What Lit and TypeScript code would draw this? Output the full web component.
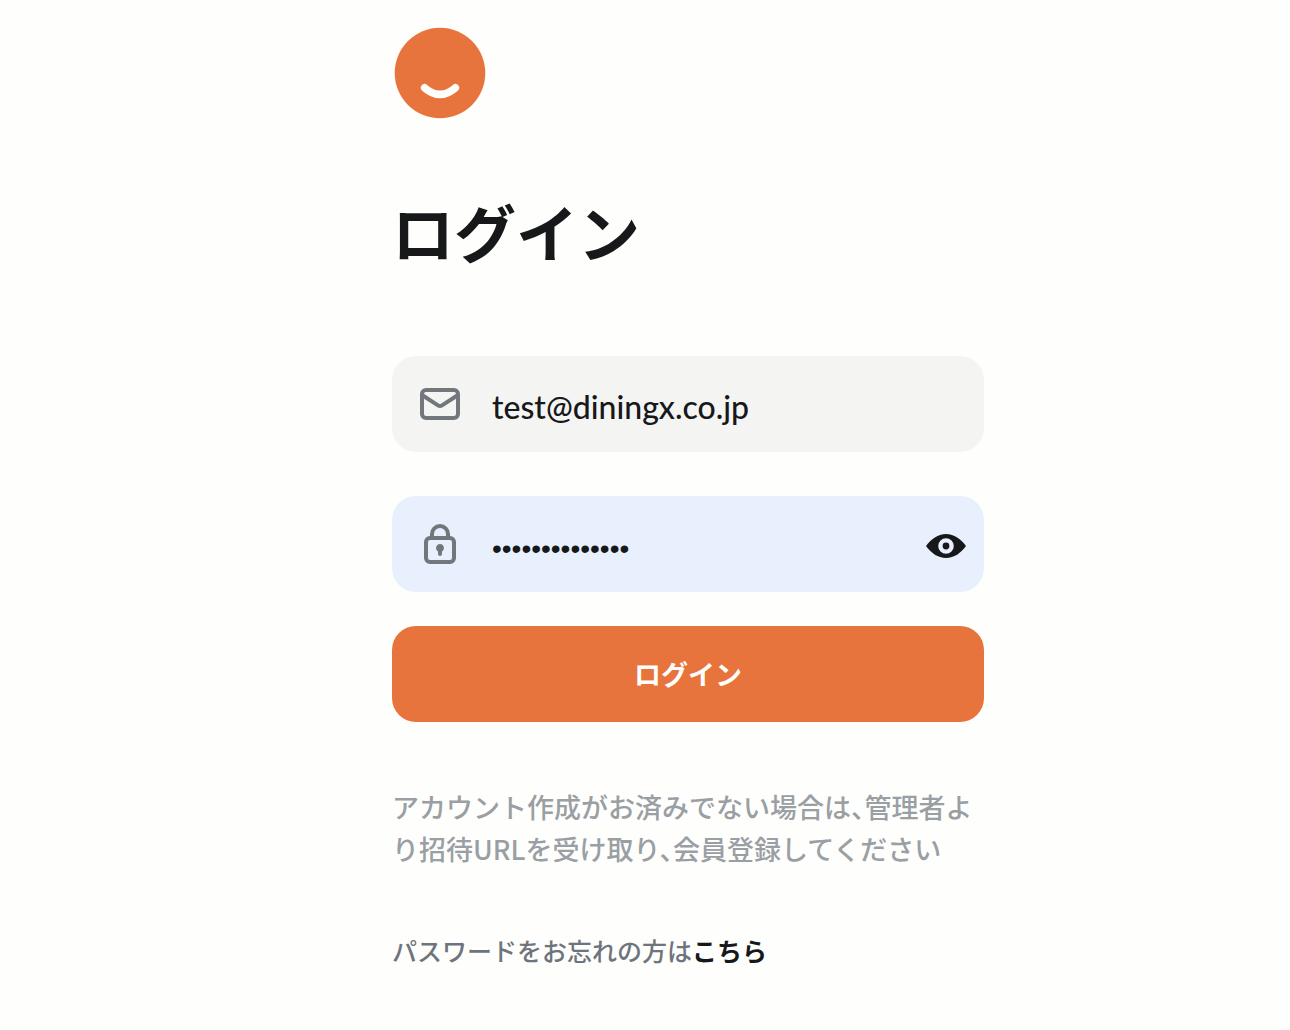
import { LitElement, html, css } from "lit";
import { customElement, state } from "lit/decorators.js";

@customElement("app-root")
export class AppRoot extends LitElement {
  @state() private revealed = false;

  static styles = css`
    :host {
      display: block;
      min-height: 100vh;
      box-sizing: border-box;
      padding: 25px 24px 24px 110px;
      background: #fefefc;
      color: #16181a;
      font-family: "Noto Sans CJK JP", sans-serif;
    }
    * {
      box-sizing: border-box;
    }
    .panel {
      max-width: 592px;
      margin: 0 auto;
      display: flex;
      flex-direction: column;
    }
    .logo {
      display: block;
      width: 96px;
      height: 96px;
    }
    .title {
      margin: 62px 0 77px;
      font-size: 62px;
      line-height: 96px;
      font-weight: 700;
    }
    .form {
      display: flex;
      flex-direction: column;
    }
    .field {
      display: flex;
      align-items: center;
      height: 96px;
      padding: 0 14px 0 24px;
      border-radius: 24px;
      background: #f4f4f3;
      margin-bottom: 44px;
    }
    .field.filled {
      background: #e8f0fe;
      margin-bottom: 34px;
    }
    .field-icon {
      display: flex;
      color: #72777c;
    }
    .icon {
      display: block;
      width: 48px;
      height: 48px;
    }
    .input {
      flex: 1;
      min-width: 0;
      height: 64px;
      margin-left: 28px;
      padding: 4px 0 0;
      border: 0;
      outline: 0;
      background: transparent;
      color: #16181a;
      font-family: Lato, sans-serif;
      font-size: 32px;
      font-weight: 500;
    }
    .input.secret {
      padding-top: 10px;
      font-family: "Liberation Sans", sans-serif;
      font-size: 28px;
    }
    .toggle {
      padding: 0;
      border: 0;
      background: transparent;
      color: #16181a;
      cursor: pointer;
    }
    .submit {
      height: 96px;
      padding: 0 0 2px;
      border: 0;
      border-radius: 24px;
      background: #e8743d;
      color: #fefefc;
      font-family: inherit;
      font-size: 27px;
      font-weight: 700;
      cursor: pointer;
    }
    .note {
      margin: 64px 0 0;
      color: #9a9fa4;
      font-size: 27px;
      line-height: 42px;
      font-weight: 500;
      font-feature-settings: "halt";
    }
    .forgot {
      margin: 59px 0 0;
      color: #6e747b;
      font-size: 25px;
      line-height: 42px;
      font-weight: 500;
    }
    .link {
      color: #16181a;
      font-weight: 700;
      text-decoration: none;
    }
  `;

  private toggle() {
    this.revealed = !this.revealed;
  }

  render() {
    return html`
      <main class="panel">
        <svg class="logo" viewBox="0 0 96 96" aria-hidden="true">
          <circle cx="48" cy="48" r="45.3" fill="#e8743d" />
          <path
            d="M32.6 62.8 Q48 76 63.4 62.8"
            fill="none"
            stroke="#fefefc"
            stroke-width="7.5"
            stroke-linecap="round"
          />
        </svg>
        <h1 class="title">ログイン</h1>
        <form class="form" @submit=${(e: Event) => e.preventDefault()}>
          <div class="field">
            <label class="field-icon" for="email" aria-label="メールアドレス">
              <svg class="icon" viewBox="0 0 48 48" fill="none" stroke="currentColor" stroke-width="4" stroke-linejoin="round">
                <rect x="6" y="10" width="36" height="28" rx="4" />
                <path d="M6 15 L22 25.4 Q24 26.7 26 25.4 L42 15" />
              </svg>
            </label>
            <input class="input" id="email" type="email" .value=${"test@diningx.co.jp"} />
          </div>
          <div class="field filled">
            <label class="field-icon" for="password" aria-label="パスワード">
              <svg class="icon" viewBox="0 0 48 48" fill="none" stroke="currentColor" stroke-width="4">
                <rect x="10" y="18" width="28" height="24" rx="4" />
                <path d="M16 18 V14 A8 8 0 0 1 32 14 V18" />
                <path
                  d="M24 24 A4 4 0 0 0 22 31.4 V34 A2 2 0 0 0 26 34 V31.4 A4 4 0 0 0 24 24 Z"
                  fill="currentColor"
                  stroke="none"
                />
              </svg>
            </label>
            <input
              class="input secret"
              id="password"
              type=${this.revealed ? "text" : "password"}
              .value=${"diningxlogin01"}
            />
            <button class="toggle" type="button" aria-label="パスワードを表示" @click=${this.toggle}>
              <svg class="icon" viewBox="0 0 48 48">
                <path
                  d="M4 26 C9 19 16 14 24 14 C32 14 39 19 44 26 C39 33 32 38 24 38 C16 38 9 33 4 26 Z"
                  fill="currentColor"
                />
                <circle cx="24" cy="26" r="5.6" fill="currentColor" stroke="#e8f0fe" stroke-width="4.4" />
              </svg>
            </button>
          </div>
          <button class="submit" type="submit">ログイン</button>
        </form>
        <p class="note">アカウント作成がお済みでない場合は、管理者より招待URLを受け取り、会員登録してください</p>
        <p class="forgot">パスワードをお忘れの方は<a class="link" href="#">こちら</a></p>
      </main>
    `;
  }
}
